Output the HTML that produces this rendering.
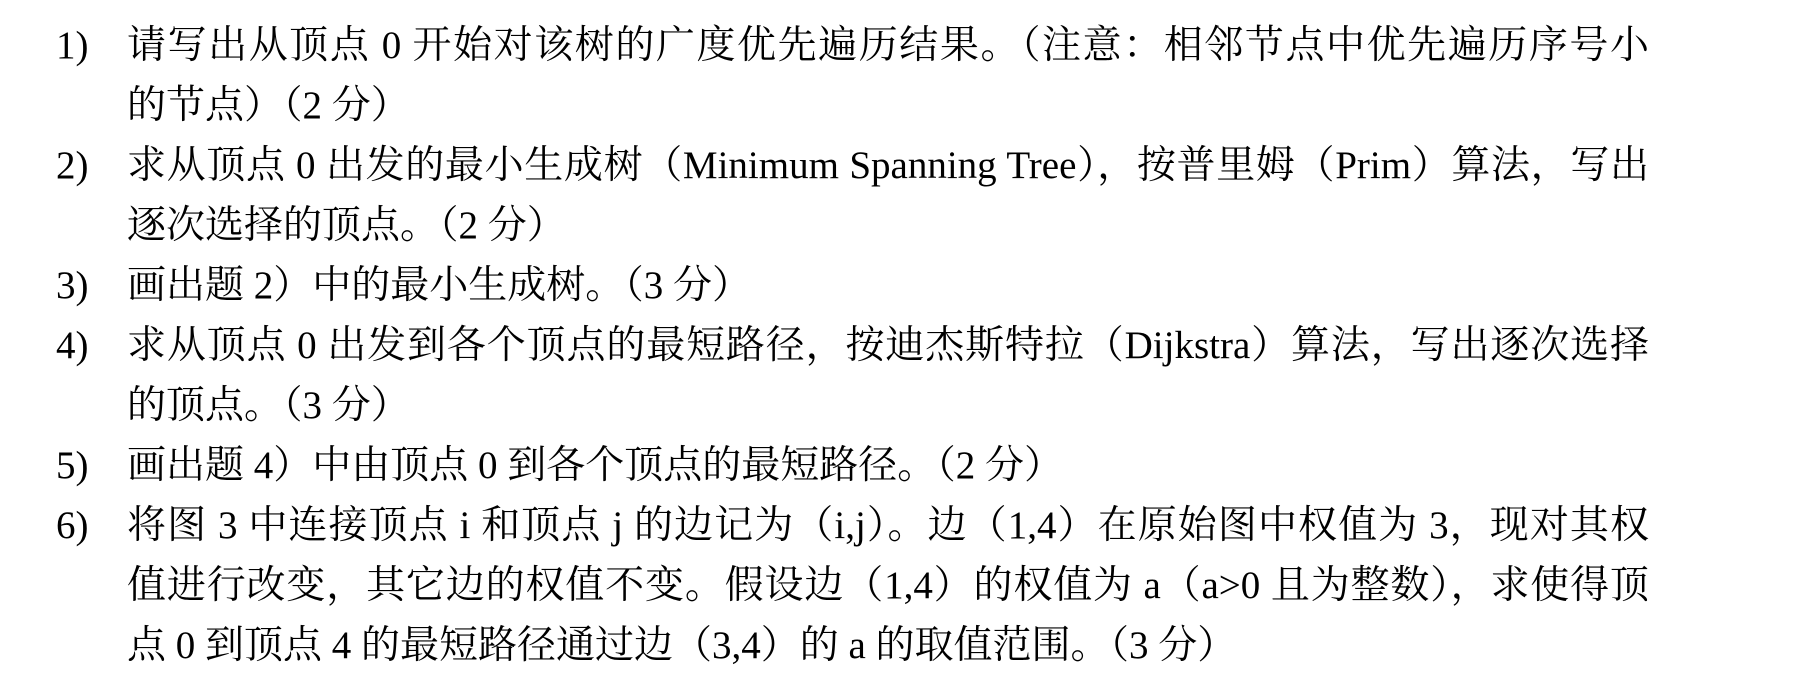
<!DOCTYPE html>
<html><head><meta charset="utf-8"><style>
html,body{margin:0;padding:0;background:#fff;}
body{width:1808px;height:672px;overflow:hidden;position:relative;font-family:"Liberation Serif","Noto Serif CJK SC",serif;font-size:39px;color:#000;}
.l{position:absolute;left:127px;width:1530px;height:60px;line-height:60px;white-space:nowrap;}
.j{text-align:justify;text-align-last:justify;}
.n{position:absolute;left:56px;height:60px;line-height:60px;}
</style></head><body>
<div class="n" style="top:16px">1)</div>
<div class="l j" style="top:16px;width:1522px">请写出从顶点 0 开始对该树的广度优先遍历结果。（注意：相邻节点中优先遍历序号小</div>
<div class="l" style="top:76px">的节点）（2 分）</div>
<div class="n" style="top:136px">2)</div>
<div class="l j" style="top:136px;width:1522px">求从顶点 0 出发的最小生成树（Minimum Spanning Tree），按普里姆（Prim）算法，写出</div>
<div class="l" style="top:196px">逐次选择的顶点。（2 分）</div>
<div class="n" style="top:256px">3)</div>
<div class="l" style="top:256px">画出题 2）中的最小生成树。（3 分）</div>
<div class="n" style="top:316px">4)</div>
<div class="l j" style="top:316px;width:1522px">求从顶点 0 出发到各个顶点的最短路径，按迪杰斯特拉（Dijkstra）算法，写出逐次选择</div>
<div class="l" style="top:376px">的顶点。（3 分）</div>
<div class="n" style="top:436px">5)</div>
<div class="l" style="top:436px">画出题 4）中由顶点 0 到各个顶点的最短路径。（2 分）</div>
<div class="n" style="top:496px">6)</div>
<div class="l j" style="top:496px;width:1522px">将图 3 中连接顶点 i 和顶点 j 的边记为（i,j）。边（1,4）在原始图中权值为 3，现对其权</div>
<div class="l j" style="top:556px;width:1522px">值进行改变，其它边的权值不变。假设边（1,4）的权值为 a（a&gt;0 且为整数），求使得顶</div>
<div class="l" style="top:616px">点 0 到顶点 4 的最短路径通过边（3,4）的 a 的取值范围。（3 分）</div>
</body></html>
